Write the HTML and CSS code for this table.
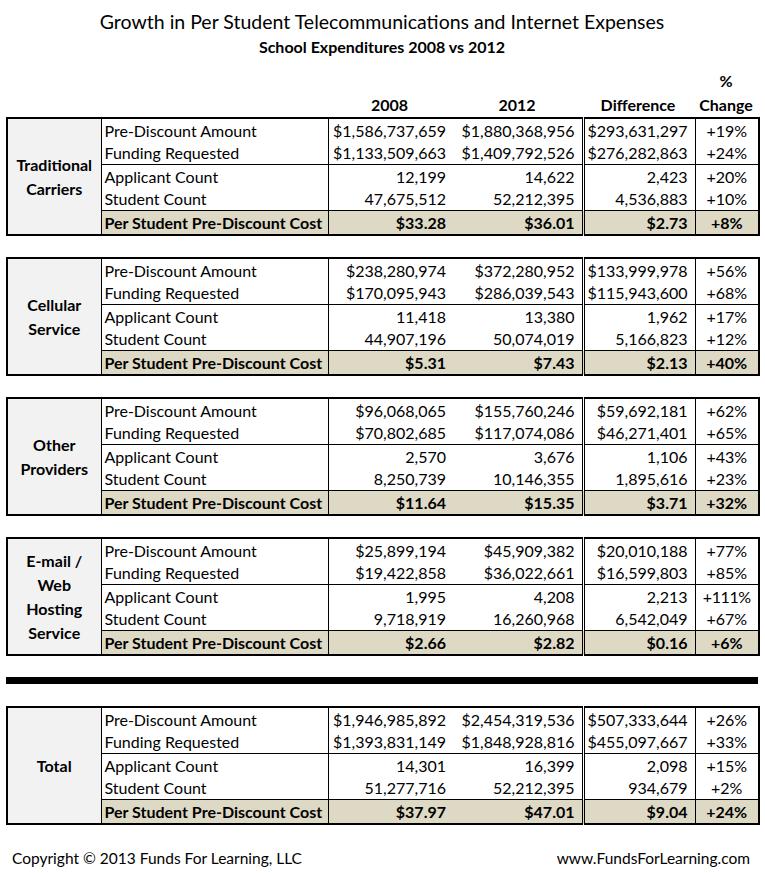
FILE: index.html
```html
<!DOCTYPE html>
<html lang="en">
<head>
<meta charset="utf-8">
<title>Growth in Per Student Telecommunications and Internet Expenses</title>
<link rel="stylesheet" href="styles.css">
</head>
<body>
<div class="page">
  <h1 class="title">Growth in Per Student Telecommunications and Internet Expenses</h1>
  <h2 class="subtitle">School Expenditures 2008 vs 2012</h2>

  <div class="colhead">
    <div></div>
    <div></div>
    <div class="h">2008</div>
    <div class="h">2012</div>
    <div class="h">Difference</div>
    <div class="h">%<br>Change</div>
  </div>

  <table class="grid">
    <colgroup><col class="c-label"><col class="c-cat"><col class="c-08"><col class="c-12"><col class="c-diff"><col class="c-pct"></colgroup>
    <tr class="r1"><td class="label" rowspan="5">Traditional<br>Carriers</td><td class="cat">Pre-Discount Amount</td><td class="num">$1,586,737,659</td><td class="num y12">$1,880,368,956</td><td class="num diff">$293,631,297</td><td class="pct">+19%</td></tr>
    <tr class="r2"><td class="cat">Funding Requested</td><td class="num">$1,133,509,663</td><td class="num y12">$1,409,792,526</td><td class="num diff">$276,282,863</td><td class="pct">+24%</td></tr>
    <tr class="r3"><td class="cat">Applicant Count</td><td class="num">12,199</td><td class="num y12">14,622</td><td class="num diff">2,423</td><td class="pct">+20%</td></tr>
    <tr class="r4"><td class="cat">Student Count</td><td class="num">47,675,512</td><td class="num y12">52,212,395</td><td class="num diff">4,536,883</td><td class="pct">+10%</td></tr>
    <tr class="r5"><td class="cat">Per Student Pre-Discount Cost</td><td class="num">$33.28</td><td class="num y12">$36.01</td><td class="num diff">$2.73</td><td class="pct">+8%</td></tr>
  </table>

  <table class="grid">
    <colgroup><col class="c-label"><col class="c-cat"><col class="c-08"><col class="c-12"><col class="c-diff"><col class="c-pct"></colgroup>
    <tr class="r1"><td class="label" rowspan="5">Cellular<br>Service</td><td class="cat">Pre-Discount Amount</td><td class="num">$238,280,974</td><td class="num y12">$372,280,952</td><td class="num diff">$133,999,978</td><td class="pct">+56%</td></tr>
    <tr class="r2"><td class="cat">Funding Requested</td><td class="num">$170,095,943</td><td class="num y12">$286,039,543</td><td class="num diff">$115,943,600</td><td class="pct">+68%</td></tr>
    <tr class="r3"><td class="cat">Applicant Count</td><td class="num">11,418</td><td class="num y12">13,380</td><td class="num diff">1,962</td><td class="pct">+17%</td></tr>
    <tr class="r4"><td class="cat">Student Count</td><td class="num">44,907,196</td><td class="num y12">50,074,019</td><td class="num diff">5,166,823</td><td class="pct">+12%</td></tr>
    <tr class="r5"><td class="cat">Per Student Pre-Discount Cost</td><td class="num">$5.31</td><td class="num y12">$7.43</td><td class="num diff">$2.13</td><td class="pct">+40%</td></tr>
  </table>

  <table class="grid">
    <colgroup><col class="c-label"><col class="c-cat"><col class="c-08"><col class="c-12"><col class="c-diff"><col class="c-pct"></colgroup>
    <tr class="r1"><td class="label" rowspan="5">Other<br>Providers</td><td class="cat">Pre-Discount Amount</td><td class="num">$96,068,065</td><td class="num y12">$155,760,246</td><td class="num diff">$59,692,181</td><td class="pct">+62%</td></tr>
    <tr class="r2"><td class="cat">Funding Requested</td><td class="num">$70,802,685</td><td class="num y12">$117,074,086</td><td class="num diff">$46,271,401</td><td class="pct">+65%</td></tr>
    <tr class="r3"><td class="cat">Applicant Count</td><td class="num">2,570</td><td class="num y12">3,676</td><td class="num diff">1,106</td><td class="pct">+43%</td></tr>
    <tr class="r4"><td class="cat">Student Count</td><td class="num">8,250,739</td><td class="num y12">10,146,355</td><td class="num diff">1,895,616</td><td class="pct">+23%</td></tr>
    <tr class="r5"><td class="cat">Per Student Pre-Discount Cost</td><td class="num">$11.64</td><td class="num y12">$15.35</td><td class="num diff">$3.71</td><td class="pct">+32%</td></tr>
  </table>

  <table class="grid">
    <colgroup><col class="c-label"><col class="c-cat"><col class="c-08"><col class="c-12"><col class="c-diff"><col class="c-pct"></colgroup>
    <tr class="r1"><td class="label" rowspan="5">E-mail /<br>Web<br>Hosting<br>Service</td><td class="cat">Pre-Discount Amount</td><td class="num">$25,899,194</td><td class="num y12">$45,909,382</td><td class="num diff">$20,010,188</td><td class="pct">+77%</td></tr>
    <tr class="r2"><td class="cat">Funding Requested</td><td class="num">$19,422,858</td><td class="num y12">$36,022,661</td><td class="num diff">$16,599,803</td><td class="pct">+85%</td></tr>
    <tr class="r3"><td class="cat">Applicant Count</td><td class="num">1,995</td><td class="num y12">4,208</td><td class="num diff">2,213</td><td class="pct tight">+111%</td></tr>
    <tr class="r4"><td class="cat">Student Count</td><td class="num">9,718,919</td><td class="num y12">16,260,968</td><td class="num diff">6,542,049</td><td class="pct">+67%</td></tr>
    <tr class="r5"><td class="cat">Per Student Pre-Discount Cost</td><td class="num">$2.66</td><td class="num y12">$2.82</td><td class="num diff">$0.16</td><td class="pct">+6%</td></tr>
  </table>

  <div class="rule"></div>

  <table class="grid">
    <colgroup><col class="c-label"><col class="c-cat"><col class="c-08"><col class="c-12"><col class="c-diff"><col class="c-pct"></colgroup>
    <tr class="r1"><td class="label" rowspan="5">Total</td><td class="cat">Pre-Discount Amount</td><td class="num">$1,946,985,892</td><td class="num y12">$2,454,319,536</td><td class="num diff">$507,333,644</td><td class="pct">+26%</td></tr>
    <tr class="r2"><td class="cat">Funding Requested</td><td class="num">$1,393,831,149</td><td class="num y12">$1,848,928,816</td><td class="num diff">$455,097,667</td><td class="pct">+33%</td></tr>
    <tr class="r3"><td class="cat">Applicant Count</td><td class="num">14,301</td><td class="num y12">16,399</td><td class="num diff">2,098</td><td class="pct">+15%</td></tr>
    <tr class="r4"><td class="cat">Student Count</td><td class="num">51,277,716</td><td class="num y12">52,212,395</td><td class="num diff">934,679</td><td class="pct">+2%</td></tr>
    <tr class="r5"><td class="cat">Per Student Pre-Discount Cost</td><td class="num">$37.97</td><td class="num y12">$47.01</td><td class="num diff">$9.04</td><td class="pct">+24%</td></tr>
  </table>

  <div class="footer">
    <span>Copyright © 2013 Funds For Learning, LLC</span>
    <span>www.FundsForLearning.com</span>
  </div>
</div>
</body>
</html>
```

FILE: styles.css
```css
html, body {
  margin: 0;
  padding: 0;
  background: #ffffff;
}

body {
  font-family: "Lato", "Open Sans", "DejaVu Sans", sans-serif;
  color: #000000;
  font-size: 16px;
}

.page {
  width: 765px;
  padding-left: 6px;
  box-sizing: border-box;
}

.title {
  margin: 0;
  padding-top: 9px;
  width: 752px;
  text-align: center;
  font-weight: 400;
  font-size: 19.5px;
  line-height: 26px;
}

.subtitle {
  margin: 0;
  width: 752px;
  text-align: center;
  font-weight: 700;
  font-size: 16px;
  line-height: 24px;
}

.colhead {
  display: grid;
  grid-template-columns: 94px 227px 125px 130px 112px 64px;
  align-items: end;
  width: 752px;
  height: 58px;
}

.colhead .h {
  text-align: center;
  font-weight: 700;
  line-height: 24px;
}

.grid {
  width: 752px;
  table-layout: fixed;
  border-collapse: collapse;
  border: 2px solid #000;
  margin-bottom: 21px;
}

.c-label { width: 94px; }
.c-cat { width: 227px; }
.c-08 { width: 125px; }
.c-12 { width: 130px; }
.c-diff { width: 112px; }
.c-pct { width: 64px; }

.grid td {
  padding: 0;
  height: 23px;
  line-height: 22px;
  white-space: nowrap;
}

.grid tr.r2 td,
.grid tr.r4 td {
  height: 22px;
  border-bottom: 1px solid #000;
}

.grid td.label {
  background: #f2f2f2;
  text-align: center;
  font-weight: 700;
  line-height: 24px;
  border-right: 1px solid #000;
  white-space: normal;
}

.grid td.cat {
  padding-left: 3px;
  border-right: 1px solid #000;
}

.grid td.num {
  text-align: right;
  padding-right: 7px;
}

.grid td.y12 {
  border-right: 3px double #000;
}

.grid td.diff {
  border-right: 1px solid #000;
}

.grid td.pct {
  text-align: center;
}

.grid td.tight {
  letter-spacing: -0.4px;
}

.grid tr.r5 td {
  background: #ddd9c4;
  font-weight: 700;
}

.rule {
  width: 752px;
  height: 7px;
  background: #000;
  margin-bottom: 22px;
}

.footer {
  display: flex;
  justify-content: space-between;
  width: 738px;
  padding-left: 6px;
  line-height: 24px;
  font-size: 15.5px;
}
```
